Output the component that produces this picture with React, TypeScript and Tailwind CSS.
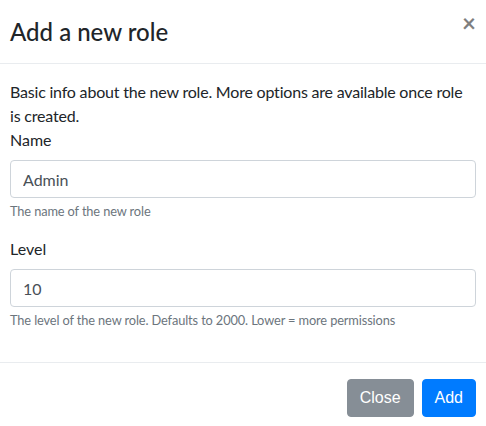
import React, { useState } from 'react';

const App: React.FC = () => {
  const [name, setName] = useState('Admin');
  const [level, setLevel] = useState('10');

  return (
    <div className="min-h-screen bg-white font-['Lato','Noto_Sans',sans-serif] text-[#212529]">
      {/* Header */}
      <div className="flex items-start justify-between border-b border-[#e9ecef] px-[10px] py-4">
        <h5 className="text-[24px] font-medium leading-[31px]">Add a new role</h5>
        <button
          type="button"
          className="-mt-[8px] text-[24px] font-bold leading-[30px] text-black opacity-50"
        >
          ×
        </button>
      </div>

      {/* Body */}
      <div className="px-[10px] py-4 text-[16px] leading-6">
        <p className="tracking-[-0.2px]">
          Basic info about the new role. More options are available once role is created.
        </p>

        <div className="mb-4">
          <label className="mb-2 inline-block">Name</label>
          <input
            type="text"
            value={name}
            onChange={(e) => setName(e.target.value)}
            className="block h-[38px] w-full rounded-[4px] border border-[#ced4da] px-3 py-[6px] text-[16px] text-[#495057] outline-none"
          />
          <small className="mt-1 block text-[12.8px] leading-[19.2px] tracking-[-0.12px] text-[#6c757d]">
            The name of the new role
          </small>
        </div>

        <div className="mb-4">
          <label className="mb-2 inline-block">Level</label>
          <input
            type="text"
            value={level}
            onChange={(e) => setLevel(e.target.value)}
            className="block h-[38px] w-full rounded-[4px] border border-[#ced4da] px-3 py-[6px] text-[16px] text-[#495057] outline-none"
          />
          <small className="mt-1 block text-[12.8px] leading-[19.2px] tracking-[-0.12px] text-[#6c757d]">
            The level of the new role. Defaults to 2000. Lower = more permissions
          </small>
        </div>
      </div>

      {/* Footer */}
      <div className="flex items-center justify-end gap-2 border-t border-[#e9ecef] px-[10px] py-4">
        <button
          type="button"
          className="h-[38px] rounded-[4px] border border-[#868e96] bg-[#868e96] px-3 font-['Liberation_Sans',Arial,sans-serif] text-[16px] text-white"
        >
          Close
        </button>
        <button
          type="button"
          className="h-[38px] rounded-[4px] border border-[#007bff] bg-[#007bff] px-3 font-['Liberation_Sans',Arial,sans-serif] text-[16px] text-white"
        >
          Add
        </button>
      </div>
    </div>
  );
};

export default App;
